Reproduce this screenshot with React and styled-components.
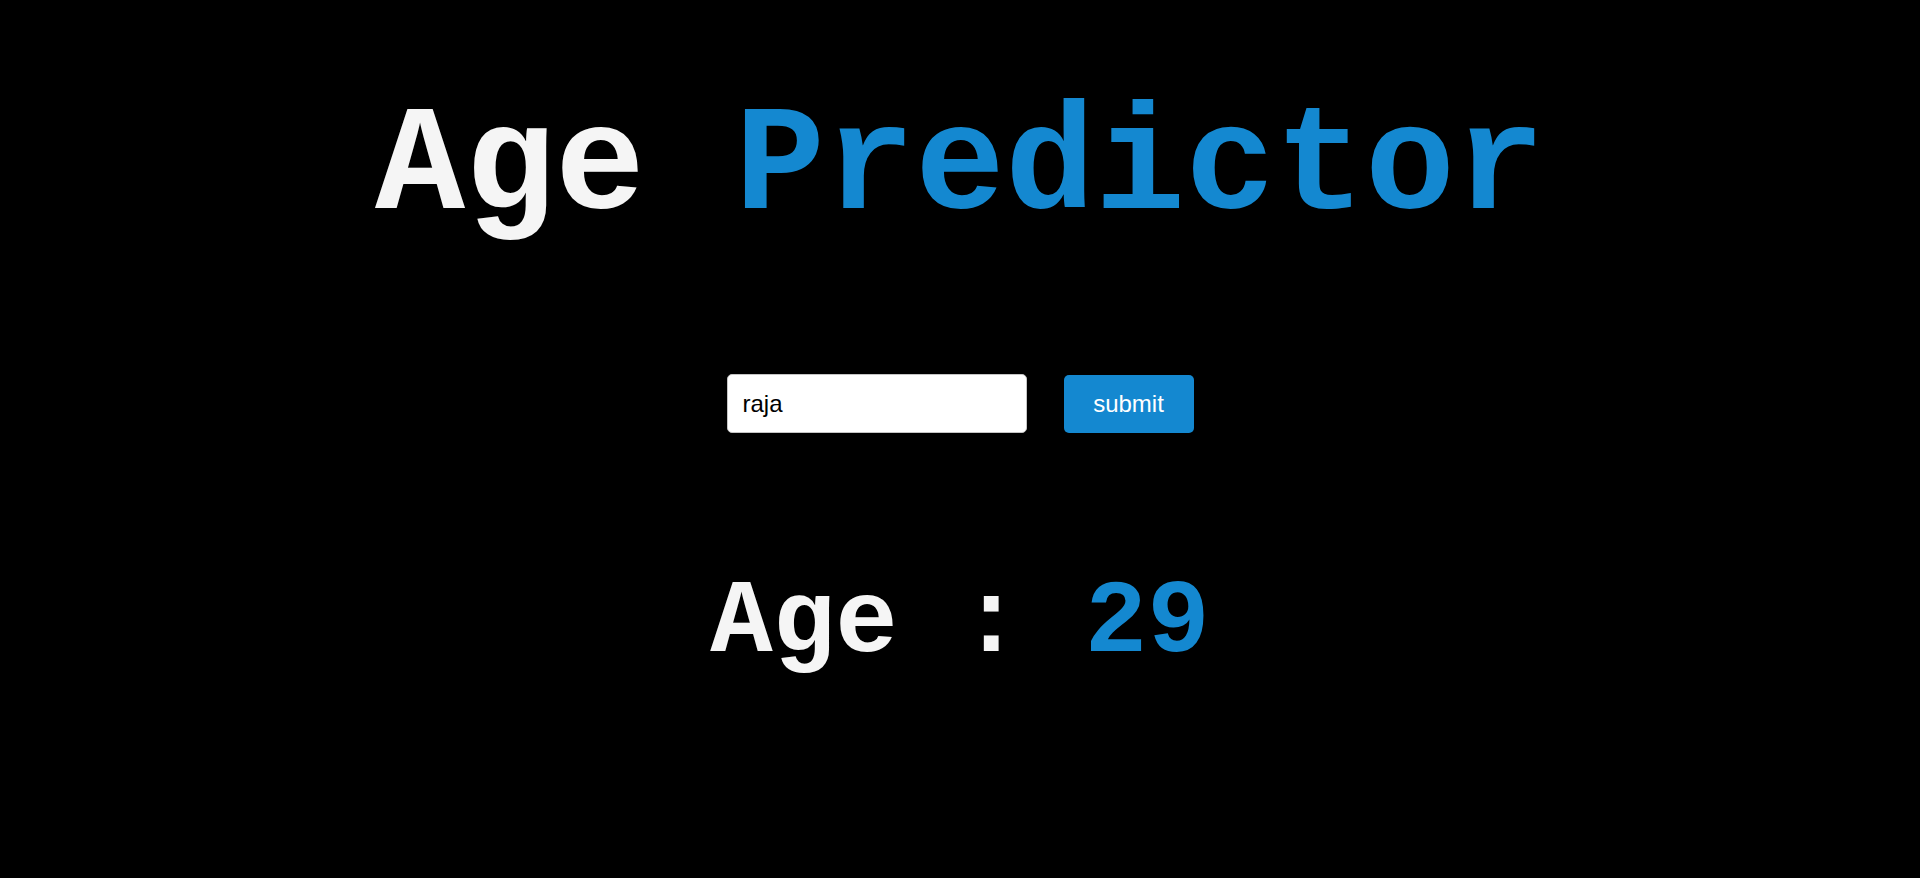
import styled, { createGlobalStyle } from 'styled-components'
import { useState } from 'react'

const GlobalStyle = createGlobalStyle`
  html, body {
    margin: 0;
    padding: 0;
    background-color: #000;
  }
`

const colors = {
  blue: '#1488d0',
  light: '#f5f5f5',
}

const Page = styled.div`
  min-height: 100vh;
  background-color: #000;
  display: flex;
  flex-direction: column;
  align-items: center;
  padding-top: 93px;
  box-sizing: border-box;
`

const Title = styled.h1`
  margin: 0;
  font-family: 'Courier New', 'Liberation Mono', monospace;
  font-weight: bold;
  font-size: 150px;
  line-height: 1;
  color: ${colors.light};
  white-space: pre;
`

const Accent = styled.span`
  color: ${colors.blue};
`

const Form = styled.form`
  display: flex;
  align-items: center;
  gap: 37px;
  margin-top: 131px;
`

const Input = styled.input`
  box-sizing: border-box;
  width: 300px;
  height: 59px;
  padding: 0 15px;
  border: 1px solid #c4c4c4;
  border-radius: 5px;
  background: #fff;
  color: #000;
  font-family: 'Liberation Sans', Arial, sans-serif;
  font-size: 24px;
  outline: none;
`

const Button = styled.button`
  box-sizing: border-box;
  width: 130px;
  height: 58px;
  border: none;
  border-radius: 5px;
  background-color: ${colors.blue};
  color: #fff;
  font-family: 'Liberation Sans', Arial, sans-serif;
  font-size: 24px;
  cursor: pointer;
`

const Result = styled.h2`
  margin: 138px 0 0;
  font-family: 'Courier New', 'Liberation Mono', monospace;
  font-weight: bold;
  font-size: 104px;
  line-height: 1;
  color: ${colors.light};
  white-space: pre;
`

function App() {
  const [name, setName] = useState('raja')
  const age = 29

  return (
    <>
      <GlobalStyle />
      <Page>
        <Title>
          Age <Accent>Predictor</Accent>
        </Title>
        <Form onSubmit={(e) => e.preventDefault()}>
          <Input
            type="text"
            value={name}
            onChange={(e) => setName(e.target.value)}
          />
          <Button type="submit">submit</Button>
        </Form>
        <Result>
          Age : <Accent>{age}</Accent>
        </Result>
      </Page>
    </>
  )
}

export default App
